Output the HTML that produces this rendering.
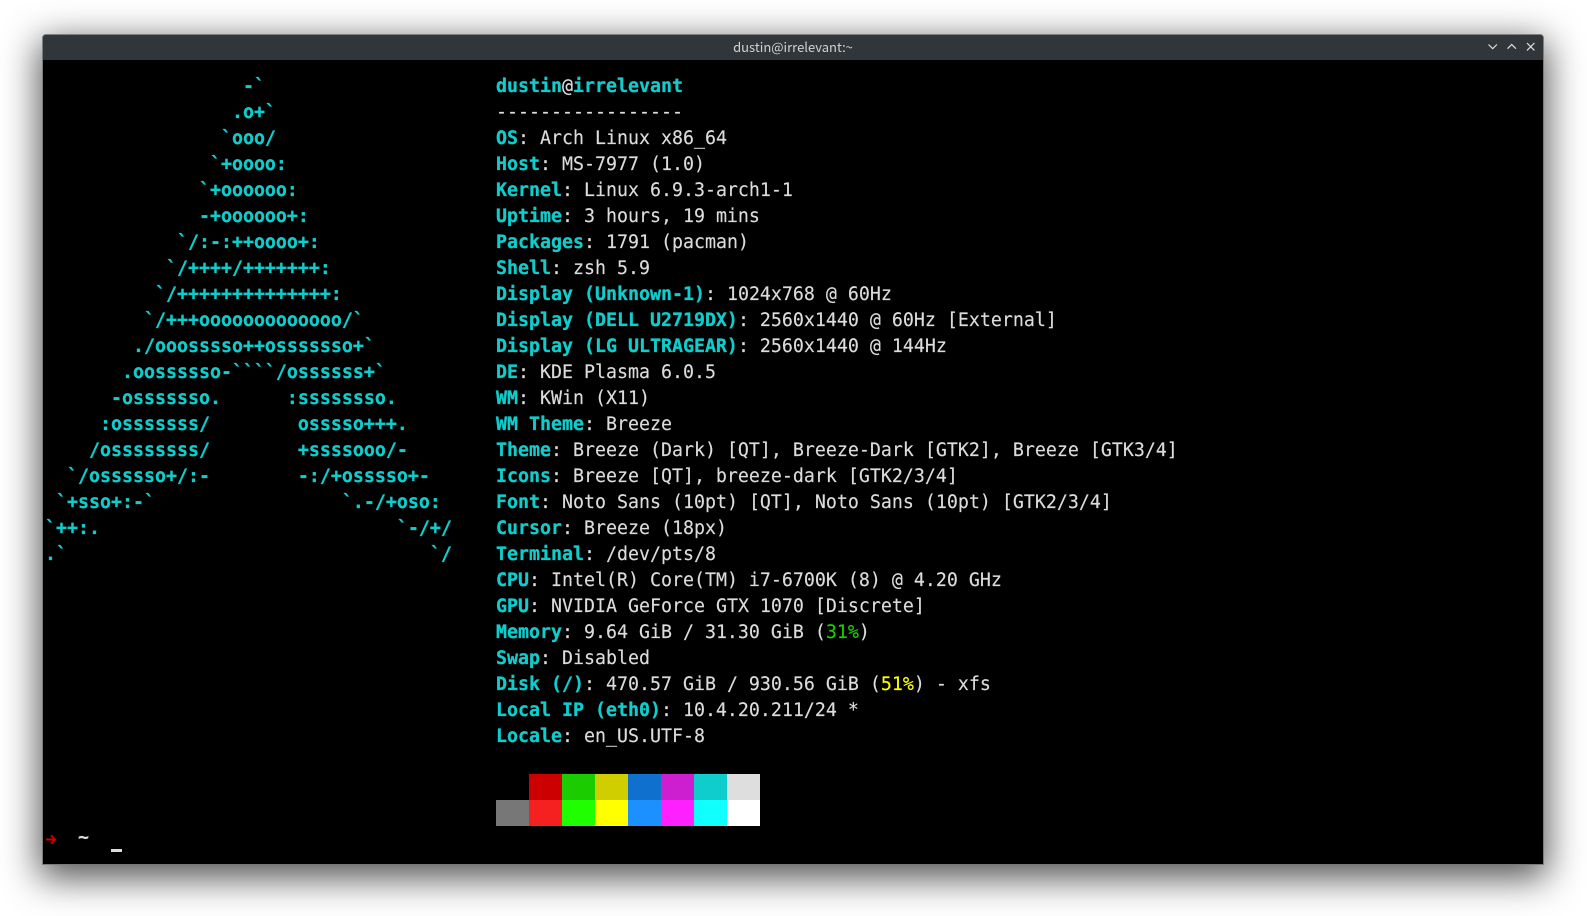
<!DOCTYPE html>
<html><head><meta charset="utf-8"><style>
html,body{margin:0;padding:0;background:#fff;width:1587px;height:916px;overflow:hidden}
#win{position:absolute;left:43px;top:35px;width:1500px;height:829px;background:#000;box-shadow:0 0 0 1px rgba(120,120,120,.9),0 10px 36px 4px rgba(0,0,0,.68);border-radius:3px 3px 0 0}
#bar{position:absolute;left:0;top:0;width:100%;height:25px;background:#31363b;border-radius:3px 3px 0 0}
#title{position:absolute;left:0;width:100%;top:-1px;height:26px;text-align:center;color:#d0d2d3;font:13px/26px "Noto Sans CJK SC","Liberation Sans",sans-serif}
#bar svg{position:absolute;left:1440px;top:-1px}
pre{position:absolute;margin:0;font-family:"DejaVu Sans Mono","Liberation Mono",monospace;font-size:18.27px;line-height:26px;color:#dcdcdc;white-space:pre;-webkit-text-stroke:.15px #dcdcdc}
b{color:#0fcdcd;font-weight:bold;-webkit-text-stroke:.3px #0fcdcd}
.l{color:#0fcdcd;font-weight:bold;-webkit-text-stroke:.3px #0fcdcd}
.g{color:#1ccd00;-webkit-text-stroke:.15px #1ccd00}.y{color:#ffff00;-webkit-text-stroke:.15px #ffff00}
.c{position:absolute;width:33px;height:26px}
</style></head><body>
<div id="win">
<div id="bar"><div id="title">dustin@irrelevant:~</div>
<svg width="60" height="26" fill="none" stroke="#dfe1e2" stroke-width="1.2"><path d="M5.500 10.500l4.200 4.200 4.200-4.200"/><path d="M24.500 14.700l4.200-4.200 4.200 4.200"/><path d="M44 9l7.400 7.400M51.400 9l-7.400 7.400"/></svg></div>
<pre class="l" style="left:2px;top:39px">                  -&#96;
                 .o+&#96;
                &#96;ooo/
               &#96;+oooo:
              &#96;+oooooo:
              -+oooooo+:
            &#96;/:-:++oooo+:
           &#96;/++++/+++++++:
          &#96;/++++++++++++++:
         &#96;/+++ooooooooooooo/&#96;
        ./ooosssso++osssssso+&#96;
       .oossssso-&#96;&#96;&#96;&#96;/ossssss+&#96;
      -osssssso.      :ssssssso.
     :osssssss/        osssso+++.
    /ossssssss/        +ssssooo/-
  &#96;/ossssso+/:-        -:/+osssso+-
 &#96;+sso+:-&#96;                 &#96;.-/+oso:
&#96;++:.                           &#96;-/+/
.&#96;                                 &#96;/</pre>
<pre style="left:453px;top:39px"><b>dustin</b>@<b>irrelevant</b>
-----------------
<b>OS</b>: Arch Linux x86_64
<b>Host</b>: MS-7977 (1.0)
<b>Kernel</b>: Linux 6.9.3-arch1-1
<b>Uptime</b>: 3 hours, 19 mins
<b>Packages</b>: 1791 (pacman)
<b>Shell</b>: zsh 5.9
<b>Display (Unknown-1)</b>: 1024x768 @ 60Hz
<b>Display (DELL U2719DX)</b>: 2560x1440 @ 60Hz [External]
<b>Display (LG ULTRAGEAR)</b>: 2560x1440 @ 144Hz
<b>DE</b>: KDE Plasma 6.0.5
<b>WM</b>: KWin (X11)
<b>WM Theme</b>: Breeze
<b>Theme</b>: Breeze (Dark) [QT], Breeze-Dark [GTK2], Breeze [GTK3/4]
<b>Icons</b>: Breeze [QT], breeze-dark [GTK2/3/4]
<b>Font</b>: Noto Sans (10pt) [QT], Noto Sans (10pt) [GTK2/3/4]
<b>Cursor</b>: Breeze (18px)
<b>Terminal</b>: /dev/pts/8
<b>CPU</b>: Intel(R) Core(TM) i7-6700K (8) @ 4.20 GHz
<b>GPU</b>: NVIDIA GeForce GTX 1070 [Discrete]
<b>Memory</b>: 9.64 GiB / 31.30 GiB (<span class="g">31%</span>)
<b>Swap</b>: Disabled
<b>Disk (/)</b>: 470.57 GiB / 930.56 GiB (<span class="y">51%</span>) - xfs
<b>Local IP (eth0)</b>: 10.4.20.211/24 *
<b>Locale</b>: en_US.UTF-8</pre>
<div class="c" style="left:486px;top:739px;background:#cd0000"></div>
<div class="c" style="left:519px;top:739px;background:#1bcd00"></div>
<div class="c" style="left:552px;top:739px;background:#d0cd00"></div>
<div class="c" style="left:585px;top:739px;background:#0f70cd"></div>
<div class="c" style="left:618px;top:739px;background:#cd1fd0"></div>
<div class="c" style="left:651px;top:739px;background:#0fcdcd"></div>
<div class="c" style="left:684px;top:739px;background:#dedede"></div>
<div class="c" style="left:453px;top:765px;background:#777777"></div>
<div class="c" style="left:486px;top:765px;background:#f52020"></div>
<div class="c" style="left:519px;top:765px;background:#20ff00"></div>
<div class="c" style="left:552px;top:765px;background:#ffff00"></div>
<div class="c" style="left:585px;top:765px;background:#1c90ff"></div>
<div class="c" style="left:618px;top:765px;background:#ff20ff"></div>
<div class="c" style="left:651px;top:765px;background:#10ffff"></div>
<div class="c" style="left:684px;top:765px;background:#ffffff"></div>
<svg style="position:absolute;left:2px;top:798px" width="12" height="12" fill="none" stroke="#cd0000" stroke-width="1.900"><path d="M1 6.500h8.500M6 2.500l4 4-4 4"/></svg>
<pre style="left:2px;top:790px;font-weight:bold">   ~</pre>
<div style="position:absolute;left:68px;top:814px;width:11px;height:3px;background:#dcdcdc"></div>
</div>
</body></html>
